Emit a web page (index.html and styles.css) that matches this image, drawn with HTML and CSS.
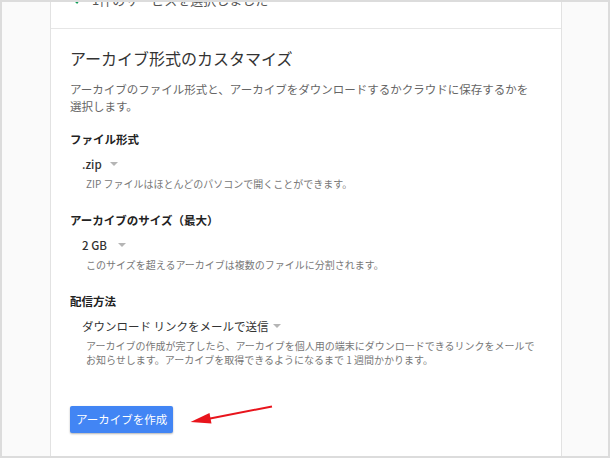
FILE: index.html
```html
<!DOCTYPE html>
<html lang="ja">
<head>
  <meta charset="UTF-8" />
  <meta name="viewport" content="width=device-width, initial-scale=1.0" />
  <title>アーカイブ形式のカスタマイズ</title>
  <link rel="stylesheet" href="styles.css">
</head>
<body>
  <div class="frame">
    <div class="card">
      <div class="selected">
        <div class="selected-line">
          <svg class="check" width="12" height="12" viewBox="0 0 12 12">
            <polyline points="1.5,6 5,9.5 10.5,2" fill="none" stroke="#0f9d58" stroke-width="2" />
          </svg>
          <span>1件のサービスを選択しました</span>
        </div>
      </div>
      <div class="customize">
        <h2 class="title">アーカイブ形式のカスタマイズ</h2>
        <p class="desc">アーカイブのファイル形式と、アーカイブをダウンロードするかクラウドに保存するかを<br>選択します。</p>

        <div class="field first">
          <div class="field-label">ファイル形式</div>
          <div class="select bold">.zip<span class="caret"></span></div>
          <div class="hint">ZIP ファイルはほとんどのパソコンで開くことができます。</div>
        </div>

        <div class="field">
          <div class="field-label">アーカイブのサイズ（最大）</div>
          <div class="select bold">2 GB<span class="caret wide"></span></div>
          <div class="hint">このサイズを超えるアーカイブは複数のファイルに分割されます。</div>
        </div>

        <div class="field">
          <div class="field-label">配信方法</div>
          <div class="select">ダウンロード リンクをメールで送信<span class="caret narrow"></span></div>
          <div class="hint">アーカイブの作成が完了したら、アーカイブを個人用の端末にダウンロードできるリンクをメールで<br>お知らせします。アーカイブを取得できるようになるまで 1 週間かかります。</div>
        </div>

        <button class="create">アーカイブを作成</button>
      </div>
    </div>
    <svg class="arrow" width="610" height="458" viewBox="0 0 610 458">
      <line x1="272" y1="406.5" x2="205" y2="419.5" stroke="#e8141c" stroke-width="2" />
      <polygon points="190.5,422 211.5,423.5 209.5,413" fill="#e8141c" />
    </svg>
  </div>
</body>
</html>
```

FILE: styles.css
```css
* {
  box-sizing: border-box;
}
body {
  margin: 0;
  font-family: "Noto Sans CJK JP", "Noto Sans", sans-serif;
  color: #333;
}
.frame {
  position: relative;
  width: 610px;
  height: 458px;
  border: 2px solid #dcdcdc;
  background: #fafafa;
  overflow: hidden;
  padding: 0 46px 0 48px;
}
.card {
  height: 100%;
  background: #fff;
  border-left: 1px solid #e2e2e2;
  border-right: 1px solid #e2e2e2;
}
.selected {
  height: 27px;
  display: flex;
  align-items: flex-end;
  padding: 0 0 19px 21px;
  border-bottom: 1px solid #e6e6e6;
}
.selected-line {
  display: flex;
  align-items: center;
  height: 20px;
  font-size: 13px;
  color: #555;
}
.check {
  margin-right: 8px;
}
.customize {
  padding: 17px 20px 0 19px;
}
.title {
  margin: 0;
  font-size: 16px;
  line-height: 24px;
  font-weight: normal;
  color: #333;
}
.desc {
  margin: 11px 0 0;
  font-size: 11.5px;
  line-height: 17px;
  color: #666;
  white-space: nowrap;
}
.field {
  margin-top: 21px;
}
.field.first {
  margin-top: 16px;
}
.field-label {
  font-size: 11.5px;
  line-height: 16px;
  font-weight: bold;
  color: #222;
}
.select {
  display: flex;
  align-items: center;
  margin: 8px 0 0 12px;
  font-size: 11.5px;
  line-height: 18px;
  color: #333;
}
.select.bold {
  font-weight: 500;
}
.caret {
  width: 0;
  height: 0;
  margin-left: 8px;
  border-left: 4px solid transparent;
  border-right: 4px solid transparent;
  border-top: 4px solid #b5b5b5;
}
.caret.wide {
  margin-left: 11px;
}
.caret.narrow {
  margin-left: 4px;
}
.hint {
  margin: 4px 0 0 16px;
  font-size: 10px;
  line-height: 14px;
  color: #777;
  white-space: nowrap;
}
.create {
  display: block;
  margin-top: 39px;
  height: 27px;
  padding: 0 6px;
  border: none;
  border-radius: 2px;
  background: #4285f4;
  color: #fff;
  font-family: inherit;
  font-size: 11.5px;
  line-height: 27px;
  box-shadow: 0 1px 2px rgba(0, 0, 0, 0.3);
}
.arrow {
  position: absolute;
  top: -2px;
  left: -2px;
  pointer-events: none;
}
```
